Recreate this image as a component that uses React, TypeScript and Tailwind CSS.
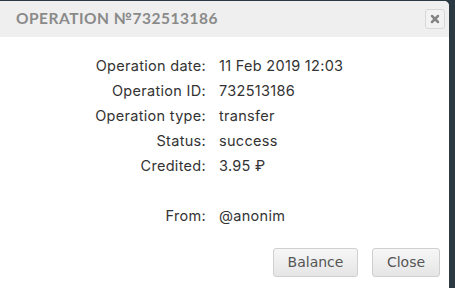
import { X } from 'lucide-react'

const rows: [string, string][] = [
  ['Operation date:', '11 Feb 2019 12:03'],
  ['Operation ID:', '732513186'],
  ['Operation type:', 'transfer'],
  ['Status:', 'success'],
  ['Credited:', '3.95 ₽'],
  ['', ''],
  ['From:', '@anonim'],
]

export default function App() {
  return (
    <div className="w-[455px] h-[288px] overflow-hidden bg-[#2b3a42] pt-[1px] pr-[6px]">
      <div className="h-[300px] bg-white rounded-tr-[5px] overflow-hidden">
        {/* header */}
        <div className="h-[36px] bg-[#efefef] flex items-center justify-between pl-[16px] pr-[4px]">
          <h2
            className="text-[15.5px] tracking-[0.5px] text-[#8a8a8a] font-bold"
            style={{ fontFamily: 'Lato, "DejaVu Sans", sans-serif' }}
          >
            OPERATION №732513186
          </h2>
          <button className="w-[20px] h-[20px] flex items-center justify-center rounded-[3px] border border-[#d8d8d8] bg-[#f2f2f2]">
            <X className="w-[12px] h-[12px] text-[#858585]" strokeWidth={5} />
          </button>
        </div>

        {/* details */}
        <div
          className="pt-[16px] text-[14.5px] tracking-[0.3px] text-[#333]"
          style={{ fontFamily: 'Inter, "Open Sans", sans-serif' }}
        >
          {rows.map(([label, value], i) => (
            <div key={i} className="grid grid-cols-[206px_1fr] h-[25px] items-center">
              <span className="text-right">{label}</span>
              <span className="pl-[13px]">{value}</span>
            </div>
          ))}
        </div>

        {/* footer */}
        <div
          className="flex justify-end gap-[14px] pt-[20px] pr-[9px]"
          style={{ fontFamily: '"DejaVu Sans", Verdana, sans-serif' }}
        >
          <button className="w-[85px] h-[29px] rounded-[3px] border border-[#cfcfcf] bg-gradient-to-b from-[#f7f7f7] to-[#e5e5e5] text-[14px] text-[#555]">
            Balance
          </button>
          <button className="w-[68px] h-[29px] rounded-[3px] border border-[#cfcfcf] bg-gradient-to-b from-[#f7f7f7] to-[#e5e5e5] text-[14px] text-[#555]">
            Close
          </button>
        </div>
      </div>
    </div>
  )
}
